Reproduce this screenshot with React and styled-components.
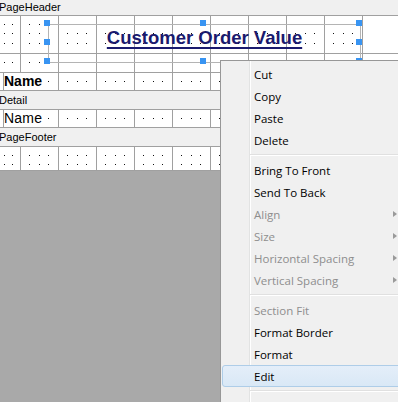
import React from 'react';
import styled, { createGlobalStyle } from 'styled-components';

const LINE = '#a0a0a0';

const Global = createGlobalStyle`
  html, body { margin: 0; padding: 0; }
  body { background: #a9a9a9; overflow: hidden; }
`;

const dotLayers = (xs, ys) =>
  xs
    .flatMap((x) =>
      ys.map(
        (y) =>
          `radial-gradient(circle at ${x + 0.5}px ${y + 0.5}px, #111 0.55px, transparent 0.9px)`
      )
    )
    .join(', ');

const Page = styled.div`
  position: relative;
  width: 398px;
  height: 402px;
  overflow: hidden;
  background: #a9a9a9;
  font-family: "Liberation Sans", Arial, sans-serif;
`;

const Report = styled.div`
  display: flex;
  flex-direction: column;
  width: 398px;
`;

const Band = styled.div`
  height: ${(p) => p.$h}px;
  line-height: ${(p) => p.$h}px;
  background: #f0f0f0;
  border-bottom: 1px solid ${LINE};
  font-size: 11px;
  color: #000;
  text-indent: -1px;
  white-space: nowrap;
`;

const Row = styled.div`
  display: flex;
  height: ${(p) => p.$h}px;
  border-bottom: 1px solid ${LINE};
  background: #fff;
  overflow: hidden;
`;

const Cell = styled.div`
  flex: 0 0 ${(p) => p.$w || 38}px;
  box-sizing: border-box;
  border-right: 1px solid ${LINE};
  padding: 0 1px 1px 0;
  background-image: ${(p) => dotLayers(p.$xs || [8, 18], p.$ys || [8])};
  background-size: 19px ${(p) => ((p.$ys || [8]).length > 1 ? 19 : 100)}px;
  background-clip: content-box;
`;

const Spacer = styled.div`
  flex: 0 0 ${(p) => p.$w}px;
`;

const NameBox = styled.div`
  flex: 0 0 56px;
  box-sizing: border-box;
  border-left: 1px solid ${LINE};
  border-right: 1px solid ${LINE};
  background-image: ${dotLayers([44], [8])};
  background-repeat: no-repeat;
  font-size: 14px;
  line-height: 17px;
  font-weight: ${(p) => (p.$bold ? 700 : 400)};
  color: #000;
  white-space: nowrap;
  letter-spacing: ${(p) => (p.$bold ? 0 : 0.2)}px;
`;

const Selection = styled.div`
  position: absolute;
  left: 48px;
  top: 24px;
  width: 313px;
  height: 39px;
  box-sizing: border-box;
  border: 1px solid #b4b4b4;
  text-align: center;
  padding-top: 3px;
`;

const Title = styled.span`
  font-size: 18.5px;
  line-height: 20px;
  font-weight: 700;
  color: #1a1a6e;
  text-decoration: underline;
  text-decoration-thickness: 2px;
  text-underline-offset: 3px;
  white-space: nowrap;
`;

const Handle = styled.span`
  position: absolute;
  width: 6px;
  height: 6px;
  background: #3894f2;
  left: ${(p) => p.$x - 4}px;
  top: ${(p) => p.$y - 4}px;
`;

const Menu = styled.div`
  position: absolute;
  left: 220px;
  top: 60px;
  width: 190px;
  box-sizing: border-box;
  border: 1px solid #979797;
  padding: 2px 2px 2px 1px;
  background: linear-gradient(
      to right,
      transparent 28px,
      #e2e3e3 28px,
      #e2e3e3 29px,
      #ffffff 29px,
      #ffffff 30px,
      transparent 30px
    ),
    #f0f0f0;
  font-family: "Open Sans", "Noto Sans", sans-serif;
  font-size: 11.5px;
`;

const Item = styled.div`
  display: flex;
  align-items: center;
  height: 22px;
  box-sizing: border-box;
  padding-left: 31px;
  border: 1px solid ${(p) => (p.$hover ? '#aecde8' : 'transparent')};
  border-radius: 3px;
  background: ${(p) =>
    p.$hover ? 'linear-gradient(#e4eef9, #d9e8f6)' : 'transparent'};
  color: ${(p) => (p.$disabled ? '#8e8e8e' : '#000')};
  white-space: nowrap;
`;

const Arrow = styled.span`
  margin-left: auto;
  margin-right: 9px;
  width: 0;
  height: 0;
  border-top: 3.5px solid transparent;
  border-bottom: 3.5px solid transparent;
  border-left: 4px solid ${(p) => (p.$disabled ? '#9a9a9a' : '#000')};
`;

const Separator = styled.div`
  height: 8px;
  margin-left: 28px;
  background: linear-gradient(
    to bottom,
    transparent 3px,
    #e0e0e0 3px,
    #e0e0e0 4px,
    #ffffff 4px,
    #ffffff 5px,
    transparent 5px
  );
`;

const menu = [
  { t: 'Cut' },
  { t: 'Copy' },
  { t: 'Paste' },
  { t: 'Delete' },
  { sep: true },
  { t: 'Bring To Front' },
  { t: 'Send To Back' },
  { t: 'Align', d: true, sub: true },
  { t: 'Size', d: true, sub: true },
  { t: 'Horizontal Spacing', d: true, sub: true },
  { t: 'Vertical Spacing', d: true, sub: true },
  { sep: true },
  { t: 'Section Fit', d: true },
  { t: 'Format Border' },
  { t: 'Format' },
  { t: 'Edit', h: true },
  { sep: true },
  { t: 'Edit Sub Reports' },
];

const COLS = 9;

const GridCells = ({ ys }) =>
  Array.from({ length: COLS }, (_, i) => <Cell key={i} $ys={ys} />);

const handles = [
  [48, 24], [48, 43], [48, 62],
  [204, 24], [204, 62],
  [360, 24], [360, 43], [360, 62],
];

export default function App() {
  return (
    <Page>
      <Global />
      <Report>
        <Band $h={15}>PageHeader</Band>
        <Row $h={37}>
          <Cell $w={21} $xs={[4, 12]} $ys={[8, 17]} />
          <GridCells ys={[8, 17]} />
        </Row>
        <Row $h={18}>
          <Cell $w={21} $xs={[4, 12]} />
          <GridCells />
        </Row>
        <Row $h={17}>
          <Spacer $w={3} />
          <NameBox $bold>Name</NameBox>
          <GridCells />
        </Row>
        <Band $h={18}>Detail</Band>
        <Row $h={17}>
          <Spacer $w={3} />
          <NameBox>Name</NameBox>
          <GridCells />
        </Row>
        <Band $h={18}>PageFooter</Band>
        <Row $h={23}>
          <Cell $w={21} $xs={[4, 12]} $ys={[8, 17]} />
          <GridCells ys={[8, 17]} />
        </Row>
      </Report>

      <Selection>
        <Title>Customer Order Value</Title>
      </Selection>
      {handles.map(([x, y]) => (
        <Handle key={`${x}-${y}`} $x={x} $y={y} />
      ))}

      <Menu>
        {menu.map((m, i) =>
          m.sep ? (
            <Separator key={i} />
          ) : (
            <Item key={i} $disabled={m.d} $hover={m.h}>
              {m.t}
              {m.sub && <Arrow $disabled={m.d} />}
            </Item>
          )
        )}
      </Menu>
    </Page>
  );
}
